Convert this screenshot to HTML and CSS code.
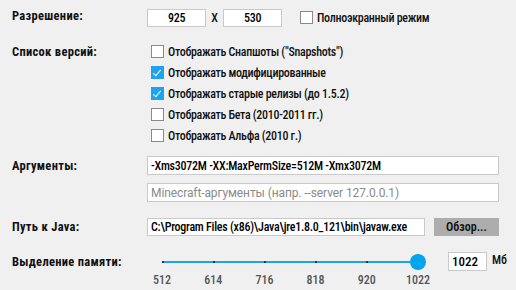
FILE: index.html
```html
<!DOCTYPE html>
<html lang="ru">
<head>
    <meta charset="UTF-8">
    <title>Настройки</title>
    <link rel="stylesheet" href="styles.css">
</head>
<body>
    <div class="settings">
        <div class="row row-res">
            <div class="label">Разрешение:</div>
            <div class="field">
                <input class="box box-num" type="text" value="925">
                <span class="times">X</span>
                <input class="box box-num" type="text" value="530">
                <label class="check check-full"><span class="tick"></span>Полноэкранный режим</label>
            </div>
        </div>

        <div class="row row-versions">
            <div class="label">Список версий:</div>
            <div class="field list">
                <label class="check"><span class="tick"></span>Отображать Снапшоты ("Snapshots")</label>
                <label class="check"><span class="tick on"></span>Отображать модифицированные</label>
                <label class="check"><span class="tick on"></span>Отображать старые релизы (до 1.5.2)</label>
                <label class="check"><span class="tick"></span>Отображать Бета (2010-2011 гг.)</label>
                <label class="check"><span class="tick"></span>Отображать Альфа (2010 г.)</label>
            </div>
        </div>

        <div class="row row-args">
            <div class="label">Аргументы:</div>
            <div class="field list">
                <input class="box box-wide" type="text" value="-Xms3072M -XX:MaxPermSize=512M -Xmx3072M">
                <input class="box box-wide second" type="text" placeholder="Minecraft-аргументы (напр. --server 127.0.0.1)">
            </div>
        </div>

        <div class="row row-java">
            <div class="label">Путь к Java:</div>
            <div class="field">
                <input class="box box-path" type="text" value="C:\Program Files (x86)\Java\jre1.8.0_121\bin\javaw.exe">
                <button class="browse">Обзор...</button>
            </div>
        </div>

        <div class="row row-mem">
            <div class="label">Выделение памяти:</div>
            <div class="field">
                <div class="slider">
                    <div class="track">
                        <i style="left: 0px"></i>
                        <i style="left: 51px"></i>
                        <i style="left: 102px"></i>
                        <i style="left: 153px"></i>
                        <i style="left: 204px"></i>
                        <span class="knob"></span>
                    </div>
                    <div class="marks">
                        <span>512</span><span>614</span><span>716</span><span>818</span><span>920</span><span>1022</span>
                    </div>
                </div>
                <input class="box box-mem" type="text" value="1022">
                <span class="unit">Мб</span>
            </div>
        </div>
    </div>
</body>
</html>
```

FILE: styles.css
```css
body {
    margin: 0;
    background-color: #f0f0f0;
    font-family: Roboto, "Liberation Sans", sans-serif;
    font-size: 12px;
    font-weight: 500;
    font-stretch: condensed;
    letter-spacing: -0.3px;
    color: #111;
}
.settings {
    padding: 7px 0 0 12px;
}
.row {
    display: flex;
}
.label {
    width: 135px;
    flex: none;
    font-size: 12.5px;
    font-weight: 700;
    letter-spacing: 0.3px;
    line-height: 18px;
}
.field {
    display: flex;
    align-items: center;
}
.list {
    flex-direction: column;
    align-items: flex-start;
}
.box {
    box-sizing: border-box;
    height: 18px;
    margin: 0;
    padding: 0 3px;
    border: 1px solid #c9c9c9;
    background: #fff;
    font-family: inherit;
    font-size: 12px;
    font-weight: 500;
    font-stretch: condensed;
    letter-spacing: -0.25px;
    font-variant-ligatures: none;
    font-feature-settings: "calt" 0, "liga" 0;
    color: #000;
    outline: none;
}
.box::placeholder {
    color: #8a8a8a;
    font-weight: 400;
    font-stretch: normal;
    letter-spacing: -0.1px;
    font-feature-settings: "calt" 0, "liga" 0;
}
.box-num {
    width: 59px;
    text-align: center;
}
.times {
    width: 17px;
    text-align: center;
}
.check {
    display: flex;
    align-items: center;
    height: 21px;
}
.check-full {
    margin-left: 18px;
}
.tick {
    box-sizing: border-box;
    width: 13px;
    height: 13px;
    margin-right: 4px;
    border: 1px solid #8a8a8a;
    background: #fff;
    position: relative;
}
.tick.on {
    border-color: #1ea4ee;
    background: #1ea4ee;
}
.tick.on::after {
    content: "";
    position: absolute;
    left: 3px;
    top: 1px;
    width: 3px;
    height: 7px;
    border: solid #fff;
    border-width: 0 1.5px 1.5px 0;
    transform: rotate(40deg);
}

/* версии */
.row-versions {
    margin-top: 13px;
}
.row-versions .label {
    line-height: 21px;
}
.row-versions .list {
    margin-left: 4px;
}

/* аргументы */
.row-args {
    margin-top: 10px;
}
.row-args .label {
    line-height: 19px;
}
.box-wide {
    width: 352px;
    height: 19px;
}
.box-wide.second {
    margin-top: 8px;
}

/* java */
.row-java {
    margin-top: 16px;
}
.box-path {
    width: 278px;
}
.browse {
    width: 65px;
    height: 18px;
    margin-left: 9px;
    border: none;
    background: #adadad;
    font-family: inherit;
    font-size: 12px;
    font-weight: 600;
    font-stretch: condensed;
    letter-spacing: 0;
    color: #111;
    padding: 0;
}

/* память */
.row-mem {
    margin-top: 16px;
}
.row-mem .label {
    line-height: 19px;
}
.row-mem .field {
    align-items: flex-start;
}
.slider {
    width: 286px;
    padding-left: 15px;
}
.track {
    position: relative;
    width: 256px;
    height: 19px;
}
.track::before {
    content: "";
    position: absolute;
    left: 0;
    right: 0;
    top: 9px;
    height: 2px;
    background: #1ea4ee;
}
.track i {
    position: absolute;
    top: 9px;
    width: 2px;
    height: 2px;
    background: #333;
}
.knob {
    position: absolute;
    left: 248px;
    top: 2px;
    width: 16px;
    height: 16px;
    border-radius: 50%;
    background: #00a4ef;
}
.marks {
    display: flex;
    justify-content: space-between;
    width: 280px;
    margin-left: -12px;
    margin-top: 2px;
    font-size: 12px;
    letter-spacing: 0;
    color: #555;
}
.marks span {
    width: 24px;
    text-align: center;
}
.box-mem {
    width: 39px;
    height: 19px;
    text-align: left;
    padding: 0 3px;
    font-size: 13px;
    letter-spacing: 0;
}
.unit {
    margin-left: 5px;
    line-height: 16px;
    letter-spacing: 0;
}
```
